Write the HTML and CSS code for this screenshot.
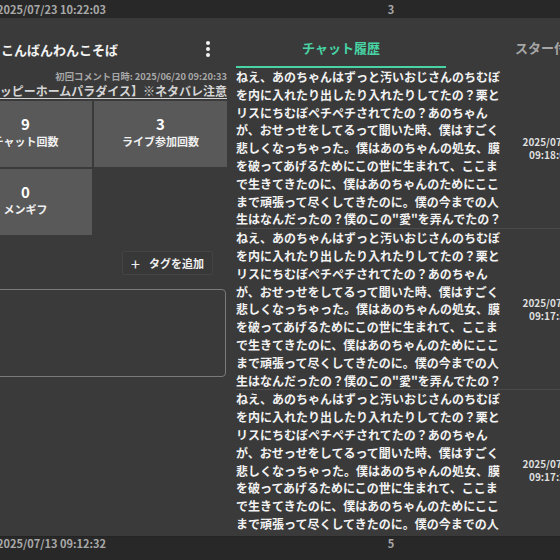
FILE: index.html
```html
<!DOCTYPE html>
<html lang="ja">
<head>
<meta charset="utf-8">
<link rel="stylesheet" href="styles.css">
</head>
<body>
<div class="row-bar top-bar">
  <span class="bar-date">2025/07/23 10:22:03</span>
  <span class="bar-count">3</span>
</div>
<div class="panel">
  <div class="left">
    <div class="title-row">
      <span class="title">こんばんわんこそば</span>
      <span class="kebab"><i></i><i></i><i></i></span>
    </div>
    <div class="meta">初回コメント日時: 2025/06/20 09:20:33</div>
    <div class="stream"><span class="stream-link">【ハッピーホームパラダイス】※ネタバレ注意</span></div>
    <div class="stats">
      <div class="stat"><div class="num">9</div><div class="label">チャット回数</div></div>
      <div class="stat"><div class="num">3</div><div class="label">ライブ参加回数</div></div>
      <div class="stat"><div class="num">0</div><div class="label">メンギフ</div></div>
    </div>
    <div class="tag-row">
      <button class="tag-btn"><span class="plus">+</span>タグを追加</button>
    </div>
    <div class="memo"></div>
  </div>
  <div class="right">
    <div class="tabs">
      <div class="tab active">チャット履歴</div>
      <div class="tab">スター付き</div>
    </div>
    <div class="chat-list">
      <div class="chat-row">
        <div class="chat-text">ねえ、あのちゃんはずっと汚いおじさんのちむぼを内に入れたり出したり入れたりしてたの？栗とリスにちむぼペチペチされてたの？あのちゃんが、おせっせをしてるって聞いた時、僕はすごく悲しくなっちゃった。僕はあのちゃんの処女、膜を破ってあげるためにこの世に生まれて、ここまで生きてきたのに、僕はあのちゃんのためにここまで頑張って尽くしてきたのに。僕の今までの人生はなんだったの？僕のこの"愛"を弄んでたの？</div>
        <div class="chat-date">2025/07/23<br>09:18:05</div>
      </div>
      <div class="chat-row">
        <div class="chat-text">ねえ、あのちゃんはずっと汚いおじさんのちむぼを内に入れたり出したり入れたりしてたの？栗とリスにちむぼペチペチされてたの？あのちゃんが、おせっせをしてるって聞いた時、僕はすごく悲しくなっちゃった。僕はあのちゃんの処女、膜を破ってあげるためにこの世に生まれて、ここまで生きてきたのに、僕はあのちゃんのためにここまで頑張って尽くしてきたのに。僕の今までの人生はなんだったの？僕のこの"愛"を弄んでたの？</div>
        <div class="chat-date">2025/07/23<br>09:17:38</div>
      </div>
      <div class="chat-row">
        <div class="chat-text">ねえ、あのちゃんはずっと汚いおじさんのちむぼを内に入れたり出したり入れたりしてたの？栗とリスにちむぼペチペチされてたの？あのちゃんが、おせっせをしてるって聞いた時、僕はすごく悲しくなっちゃった。僕はあのちゃんの処女、膜を破ってあげるためにこの世に生まれて、ここまで生きてきたのに、僕はあのちゃんのためにここまで頑張って尽くしてきたのに。僕の今までの人生はなんだったの？僕のこの"愛"を弄んでたの？</div>
        <div class="chat-date">2025/07/23<br>09:17:21</div>
      </div>
    </div>
  </div>
</div>
<div class="row-bar bottom-bar">
  <span class="bar-date">2025/07/13 09:12:32</span>
  <span class="bar-count">5</span>
</div>
</body>
</html>
```
FILE: styles.css
```css
html, body {
  margin: 0;
  padding: 0;
  width: 560px;
  height: 560px;
  overflow: hidden;
  background: #3a3a3a;
  font-family: "Noto Sans CJK JP", "Noto Sans", sans-serif;
  color: #eeeeee;
}

.row-bar {
  display: grid;
  grid-template-columns: 300px 182px 1fr;
  align-items: center;
  background: #282828;
  font-size: 11px;
  font-weight: 700;
  color: #a8a8a8;
}
.row-bar .bar-date {
  margin-left: -3px;
  white-space: nowrap;
}
.row-bar .bar-count {
  text-align: center;
}
.top-bar {
  height: 18px;
  line-height: 18px;
  padding-bottom: 1px;
  box-sizing: border-box;
}
.bottom-bar {
  height: 23px;
  align-items: start;
  line-height: 12px;
  border-top: 1px solid #242424;
}

.panel {
  height: 518px;
  display: flex;
  overflow: hidden;
}

.left {
  flex: none;
  width: 268px;
  margin-left: -41px;
  margin-right: 9px;
  display: flex;
  flex-direction: column;
}

.title-row {
  height: 24px;
  margin-top: 19px;
  display: flex;
  align-items: center;
  justify-content: space-between;
  padding-left: 42px;
  padding-right: 17px;
}
.title {
  font-size: 13px;
  font-weight: 700;
  color: #f2f2f2;
}
.kebab {
  display: flex;
  flex-direction: column;
  gap: 2px;
}
.kebab i {
  display: block;
  width: 4px;
  height: 4px;
  border-radius: 50%;
  background: #f4f4f4;
}

.meta {
  margin-top: 8px;
  height: 14px;
  line-height: 14px;
  font-size: 9.3px;
  font-weight: 700;
  color: #a8a8a8;
  text-align: right;
  white-space: nowrap;
}
.stream {
  height: 16px;
  display: flex;
  justify-content: flex-end;
  white-space: nowrap;
}
.stream-link {
  font-size: 12px;
  font-weight: 700;
  line-height: 16px;
  color: #d4d4d4;
  text-decoration: underline;
  text-underline-offset: 2px;
}

.stats {
  margin-top: 2px;
  display: grid;
  grid-template-columns: 133px 133px;
  grid-auto-rows: 66px;
  gap: 2px;
}
.stat {
  background: #595959;
  display: flex;
  flex-direction: column;
  align-items: center;
  justify-content: center;
  padding-bottom: 4px;
  box-sizing: border-box;
}
.stat .num {
  font-size: 15px;
  font-weight: 700;
  line-height: 18px;
  color: #ffffff;
}
.stat .label {
  font-size: 11px;
  font-weight: 700;
  line-height: 16px;
  color: #f0f0f0;
}

.tag-row {
  margin-top: 16px;
  display: flex;
  justify-content: flex-end;
  padding-right: 14px;
}
.tag-btn {
  height: 24px;
  width: 91px;
  padding: 0;
  border: 1px solid #444444;
  background: #383838;
  border-radius: 2px;
  color: #f0f0f0;
  font-family: inherit;
  font-size: 11px;
  font-weight: 700;
  display: flex;
  align-items: center;
  justify-content: center;
  gap: 9px;
}
.tag-btn .plus {
  font-size: 16px;
  font-weight: 400;
  line-height: 16px;
}

.memo {
  margin-top: 14px;
  margin-right: 1px;
  height: 88px;
  border: 1px solid #7a7a7a;
  border-radius: 4px;
  box-sizing: border-box;
}

.right {
  flex: 1;
  display: flex;
  flex-direction: column;
  min-width: 0;
}
.tabs {
  display: flex;
  height: 50px;
  flex: none;
}
.tab {
  flex: none;
  width: 210px;
  box-sizing: border-box;
  padding-top: 20px;
  text-align: center;
  font-size: 13px;
  font-weight: 700;
  line-height: 20px;
  color: #a6a6a6;
  white-space: nowrap;
}
.tab.active {
  color: #48d4a4;
  border-bottom: 2px solid #48d4a4;
}
.tab + .tab {
  text-align: left;
  padding-left: 69px;
}

.chat-list {
  display: flex;
  flex-direction: column;
}
.chat-row {
  display: flex;
  border-bottom: 1px solid #4a4a4a;
  flex: none;
}
.chat-text {
  flex: none;
  width: 271px;
  font-size: 12px;
  font-weight: 700;
  line-height: 17.8px;
  color: #f2f2f2;
}
.chat-date {
  flex: none;
  width: 100px;
  margin-left: -7px;
  display: flex;
  align-items: center;
  justify-content: center;
  text-align: center;
  font-size: 10px;
  font-weight: 700;
  line-height: 13px;
  color: #dedede;
}
```
